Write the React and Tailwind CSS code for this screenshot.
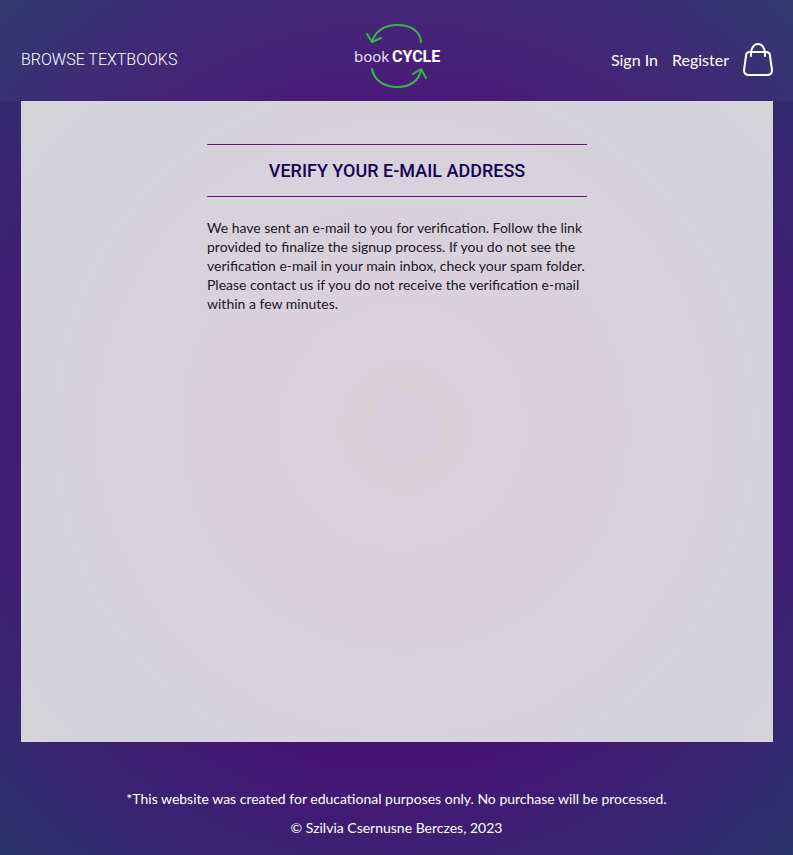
function Logo() {
  return (
    <svg viewBox="0 0 90 68" className="h-[68px] w-[90px]" role="img" aria-label="bookCYCLE">
      <g fill="none" stroke="#36b944" strokeWidth="2" strokeLinecap="round" strokeLinejoin="round">
        <path d="M69 20C68 9 59 3 45 3C33 3 23 9 20 20" />
        <path d="M15 12L20 20L29 16" />
        <path d="M20 47C22 58 32 65 45 65C58 65 67 59 69 48" />
        <path d="M61 52L69 47L74 56" />
      </g>
      <text x="2" y="40" fontSize="15" fill="#f1e6fa" fontFamily="'Open Sans', sans-serif" fontWeight="400">book</text>
      <text x="40" y="40" fontSize="16" fill="#fff" fontFamily="Roboto, sans-serif" fontWeight="700">CYCLE</text>
    </svg>
  );
}

function Bag() {
  return (
    <svg viewBox="0 0 30 36" className="h-9 w-[30px]" fill="none" stroke="#fff" strokeWidth="2" strokeLinecap="round" strokeLinejoin="round" aria-hidden="true">
      <path d="M7 10H23Q27 10 27 14L29 28Q29 33 24 33H6Q1 33 1 28L3 14Q3 10 7 10Z" />
      <path d="M8 14V10C9 5 11 2 15 2C19 2 21 5 22 10V14" />
    </svg>
  );
}

export default function App() {
  return (
    <div className="flex min-h-screen flex-col bg-[radial-gradient(circle_at_center,#4b0f78_0%,#4b0f78_50%,#2b346c_100%)] font-['Lato',sans-serif] text-white">
      <header className="grid h-[101px] grid-cols-[1fr_auto_1fr] items-center bg-white/3 pt-[18px] pr-5 pl-[21px]">
        <nav>
          <a href="#browse" className="font-['Roboto',sans-serif] text-base font-light">BROWSE TEXTBOOKS</a>
        </nav>
        <a href="#home" className="mb-2"><Logo /></a>
        <nav className="flex items-center justify-end gap-[14px]">
          <a href="#signin" className="text-base">Sign In</a>
          <a href="#register" className="text-base">Register</a>
          <a href="#bag" aria-label="Shopping bag"><Bag /></a>
        </nav>
      </header>
      <main className="mr-5 ml-[21px] flex-1 bg-[radial-gradient(circle_at_51%_51%,#dacddc_34px,#dcd0d8_36px,#dcd0d8_60px,#d9d1dc_68px,#d8d2dd_280px,#d4d3dc_370px,#d5d4d9_480px)] px-5 pt-[43px]">
        <section className="mx-auto max-w-[380px]">
          <h1 className="border-y border-[#6b157d] py-[13px] text-center font-['Roboto',sans-serif] text-lg leading-[25px] font-medium text-[#150451]">VERIFY YOUR E-MAIL ADDRESS</h1>
          <p className="mt-[21px] text-sm leading-[19px] text-[#1b181d]">
            We have sent an e-mail to you for verification. Follow the link provided to finalize the signup process. If you do not see the verification e-mail in your main inbox, check your spam folder. Please contact us if you do not receive the verification e-mail within a few minutes.
          </p>
        </section>
      </main>
      <footer className="flex h-[113px] flex-col items-center justify-end gap-[10px] pb-[18px] text-center text-sm leading-[19px]">
        <p>*This website was created for educational purposes only. No purchase will be processed.</p>
        <p>© Szilvia Csernusne Berczes, 2023</p>
      </footer>
    </div>
  );
}
